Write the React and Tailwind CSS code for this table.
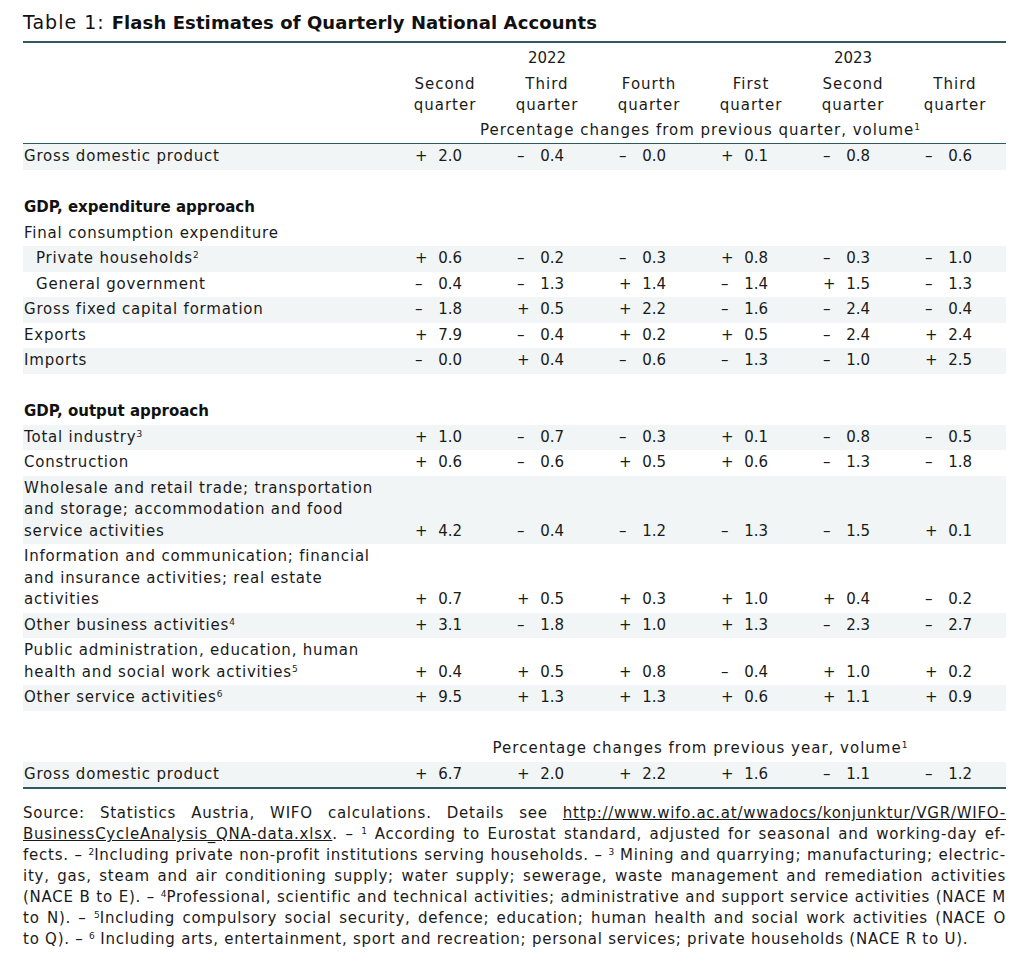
const font = { fontFamily: '"DejaVu Sans", "Liberation Sans", sans-serif' };

const rows = [
  { type: 'data', label: ['Gross domestic product'], values: ['+2.0', '–0.4', '–0.0', '+0.1', '–0.8', '–0.6'], shade: true },
  { type: 'blank' },
  { type: 'head', label: 'GDP, expenditure approach' },
  { type: 'data', label: ['Final consumption expenditure'] },
  { type: 'data', label: ['Private households'], sup: '2', indent: true, values: ['+0.6', '–0.2', '–0.3', '+0.8', '–0.3', '–1.0'], shade: true },
  { type: 'data', label: ['General government'], indent: true, values: ['–0.4', '–1.3', '+1.4', '–1.4', '+1.5', '–1.3'] },
  { type: 'data', label: ['Gross fixed capital formation'], values: ['–1.8', '+0.5', '+2.2', '–1.6', '–2.4', '–0.4'], shade: true },
  { type: 'data', label: ['Exports'], values: ['+7.9', '–0.4', '+0.2', '+0.5', '–2.4', '+2.4'] },
  { type: 'data', label: ['Imports'], values: ['–0.0', '+0.4', '–0.6', '–1.3', '–1.0', '+2.5'], shade: true },
  { type: 'blank' },
  { type: 'head', label: 'GDP, output approach' },
  { type: 'data', label: ['Total industry'], sup: '3', values: ['+1.0', '–0.7', '–0.3', '+0.1', '–0.8', '–0.5'], shade: true },
  { type: 'data', label: ['Construction'], values: ['+0.6', '–0.6', '+0.5', '+0.6', '–1.3', '–1.8'] },
  {
    type: 'data',
    label: ['Wholesale and retail trade; transportation', 'and storage; accommodation and food', 'service activities'],
    values: ['+4.2', '–0.4', '–1.2', '–1.3', '–1.5', '+0.1'],
    shade: true,
  },
  {
    type: 'data',
    label: ['Information and communication; financial', 'and insurance activities; real estate', 'activities'],
    values: ['+0.7', '+0.5', '+0.3', '+1.0', '+0.4', '–0.2'],
  },
  { type: 'data', label: ['Other business activities'], sup: '4', values: ['+3.1', '–1.8', '+1.0', '+1.3', '–2.3', '–2.7'], shade: true },
  {
    type: 'data',
    label: ['Public administration, education, human', 'health and social work activities'],
    sup: '5',
    values: ['+0.4', '+0.5', '+0.8', '–0.4', '+1.0', '+0.2'],
  },
  { type: 'data', label: ['Other service activities'], sup: '6', values: ['+9.5', '+1.3', '+1.3', '+0.6', '+1.1', '+0.9'], shade: true },
  { type: 'blank' },
  { type: 'note', label: 'Percentage changes from previous year, volume' },
  { type: 'data', label: ['Gross domestic product'], values: ['+6.7', '+2.0', '+2.2', '+1.6', '–1.1', '–1.2'], shade: true },
];

const Sup = ({ children }) => (
  <span className="relative -top-[5px] text-[9px] leading-none tracking-normal">{children}</span>
);

const Value = ({ v }) => (
  <div className="w-[102px] pl-[21px] flex">
    <span className="w-[19px]">{v[0]}</span>
    <span className="w-[28px] text-right">{v.slice(1)}</span>
  </div>
);

const Row = ({ row }) => {
  if (row.type === 'blank') return <div className="h-[25.5px]" />;
  if (row.type === 'head')
    return <div className="py-[2px] pl-[1px] font-bold text-[#111]">{row.label}</div>;
  if (row.type === 'note')
    return (
      <div className="flex py-[2px]">
        <div className="w-[371px]" />
        <div className="w-[612px] text-center tracking-[1px]">
          {row.label}
          <Sup>1</Sup>
        </div>
      </div>
    );
  return (
    <div className={`flex items-end py-[2px] ${row.shade ? 'bg-[#f2f5f6]' : ''}`}>
      <div className={`w-[371px] whitespace-nowrap tracking-[0.8px] ${row.indent ? 'pl-[13px]' : 'pl-[1px]'}`}>
        {row.label.map((l, i) => (
          <div key={i}>
            {l}
            {i === row.label.length - 1 && row.sup && <Sup>{row.sup}</Sup>}
          </div>
        ))}
      </div>
      {row.values && row.values.map((v, i) => <Value key={i} v={v} />)}
    </div>
  );
};

const Footnotes = () => (
  <div className="mt-[14px] text-[15px] leading-[21px] tracking-[0.75px] text-[#1a1a1a]">
    <div className="whitespace-nowrap [text-align-last:justify]">
      Source: Statistics Austria, WIFO calculations. Details see{' '}
      <span className="underline">http://www.wifo.ac.at/wwadocs/konjunktur/VGR/WIFO-</span>
    </div>
    <div className="whitespace-nowrap [text-align-last:justify]">
      <span className="underline">BusinessCycleAnalysis_QNA-data.xlsx</span>. – <Sup>1</Sup> According to Eurostat standard, adjusted for seasonal and working-day ef-
    </div>
    <div className="whitespace-nowrap [text-align-last:justify]">
      fects. – <Sup>2</Sup>Including private non-profit institutions serving households. – <Sup>3</Sup> Mining and quarrying; manufacturing; electric-
    </div>
    <div className="whitespace-nowrap [text-align-last:justify]">
      ity, gas, steam and air conditioning supply; water supply; sewerage, waste management and remediation activities
    </div>
    <div className="whitespace-nowrap [text-align-last:justify]">
      (NACE B to E). – <Sup>4</Sup>Professional, scientific and technical activities; administrative and support service activities (NACE M
    </div>
    <div className="whitespace-nowrap [text-align-last:justify]">
      to N). – <Sup>5</Sup>Including compulsory social security, defence; education; human health and social work activities (NACE O
    </div>
    <div className="whitespace-nowrap">
      to Q). – <Sup>6</Sup> Including arts, entertainment, sport and recreation; personal services; private households (NACE R to U).
    </div>
  </div>
);

export default function App() {
  return (
    <div className="bg-white min-h-screen text-[#1a1a1a]" style={font}>
      <div className="ml-[23px] w-[983px]">
        <div className="pt-[8px] pb-[3px] leading-[28px] text-[#111] whitespace-nowrap">
          <span className="text-[19px] tracking-[1px]">Table 1: </span>
          <span className="text-[18px] font-bold tracking-[0.1px]">Flash Estimates of Quarterly National Accounts</span>
        </div>
        <div className="h-[2px] bg-[#2e5b5d]" />

        <div className="pt-[2px] text-[15px] leading-[21.5px]">
          <div className="flex pt-[3px] pb-[2px]">
            <div className="w-[371px]" />
            <div className="w-[102px]" />
            <div className="w-[102px] text-center">2022</div>
            <div className="w-[204px]" />
            <div className="w-[102px] text-center">2023</div>
          </div>
          <div className="flex py-[2px] tracking-[1px]">
            <div className="w-[371px]" />
            {['Second', 'Third', 'Fourth', 'First', 'Second', 'Third'].map((q, i) => (
              <div key={i} className="w-[102px] text-center">
                {q}
                <br />
                quarter
              </div>
            ))}
          </div>
          <div className="flex pt-[1px] pb-[2px] tracking-[1px]">
            <div className="w-[371px]" />
            <div className="w-[612px] text-center">
              Percentage changes from previous quarter, volume<Sup>1</Sup>
            </div>
          </div>
          <div className="h-px bg-[#2e5b5d]" />

          {rows.map((r, i) => (
            <Row key={i} row={r} />
          ))}
          <div className="h-[2px] bg-[#2e5b5d]" />
        </div>

        <Footnotes />
      </div>
    </div>
  );
}
